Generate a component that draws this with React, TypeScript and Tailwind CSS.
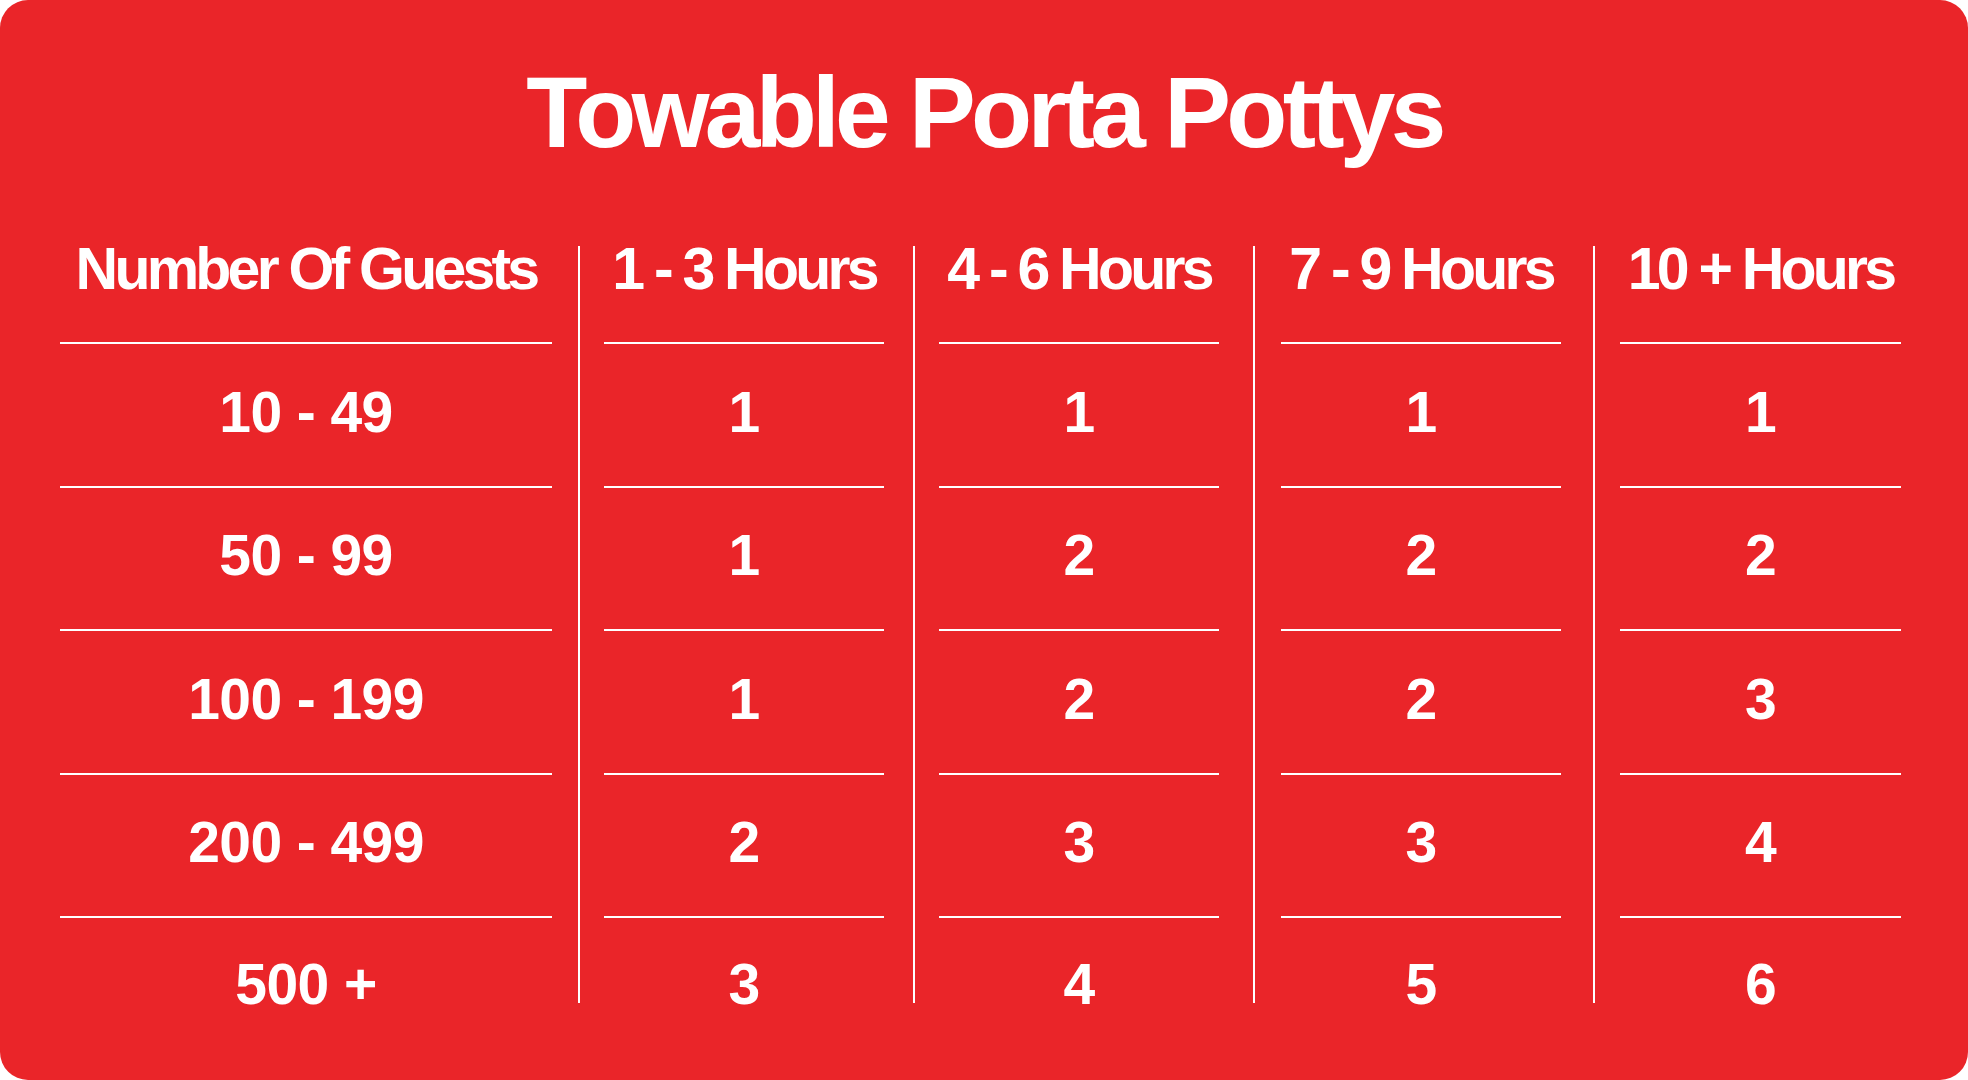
import React from "react";

type Col = {
  header: string;
  values: string[];
  width: string;
  ml: string;
};

const cols: Col[] = [
  { header: "Number Of Guests", values: ["10 - 49", "50 - 99", "100 - 199", "200 - 499", "500 +"], width: "w-[492px]", ml: "ml-0" },
  { header: "1 - 3 Hours", values: ["1", "1", "1", "2", "3"], width: "w-[280px]", ml: "ml-[24px]" },
  { header: "4 - 6 Hours", values: ["1", "2", "2", "3", "4"], width: "w-[280px]", ml: "ml-[24px]" },
  { header: "7 - 9 Hours", values: ["1", "2", "2", "3", "5"], width: "w-[280px]", ml: "ml-[26px]" },
  { header: "10 + Hours", values: ["1", "2", "3", "4", "6"], width: "w-[281px]", ml: "ml-[25px]" },
];

const sepMl = ["ml-[26px]", "ml-[29px]", "ml-[34px]", "ml-[32px]"];

function Column({ col }: { col: Col }) {
  return (
    <div className={`flex flex-col ${col.width} ${col.ml}`}>
      <div className="h-[102px] text-center text-[59px] leading-none tracking-[-0.064em]">{col.header}</div>
      <div className="h-[2px] bg-white" />
      {col.values.slice(0, 4).map((v, i) => (
        <React.Fragment key={i}>
          <div className="h-[141.5px] flex items-center justify-center pb-[5px] text-[57px] leading-none tracking-[-0.01em]">
            {v}
          </div>
          <div className="h-[2px] bg-white" />
        </React.Fragment>
      ))}
      <div className="h-[132px] flex items-center justify-center text-[57px] leading-none tracking-[-0.01em]">
        {col.values[4]}
      </div>
    </div>
  );
}

export default function App() {
  return (
    <div className="w-[1968px] h-[1080px] bg-white">
      <div className="h-full rounded-[28px] bg-[#ea2529] text-white font-bold font-['Liberation_Sans',Arial,sans-serif] overflow-hidden">
        <h1 className="pt-[62px] text-center text-[100px] leading-none tracking-[-0.047em]">Towable Porta Pottys</h1>
        <div className="mt-[78px] flex items-start pl-[60px]">
          {cols.map((c, i) => (
            <React.Fragment key={i}>
              {i > 0 && <div className={`mt-[6px] h-[757px] w-[2px] shrink-0 bg-white ${sepMl[i - 1]}`} />}
              <Column col={c} />
            </React.Fragment>
          ))}
        </div>
      </div>
    </div>
  );
}
